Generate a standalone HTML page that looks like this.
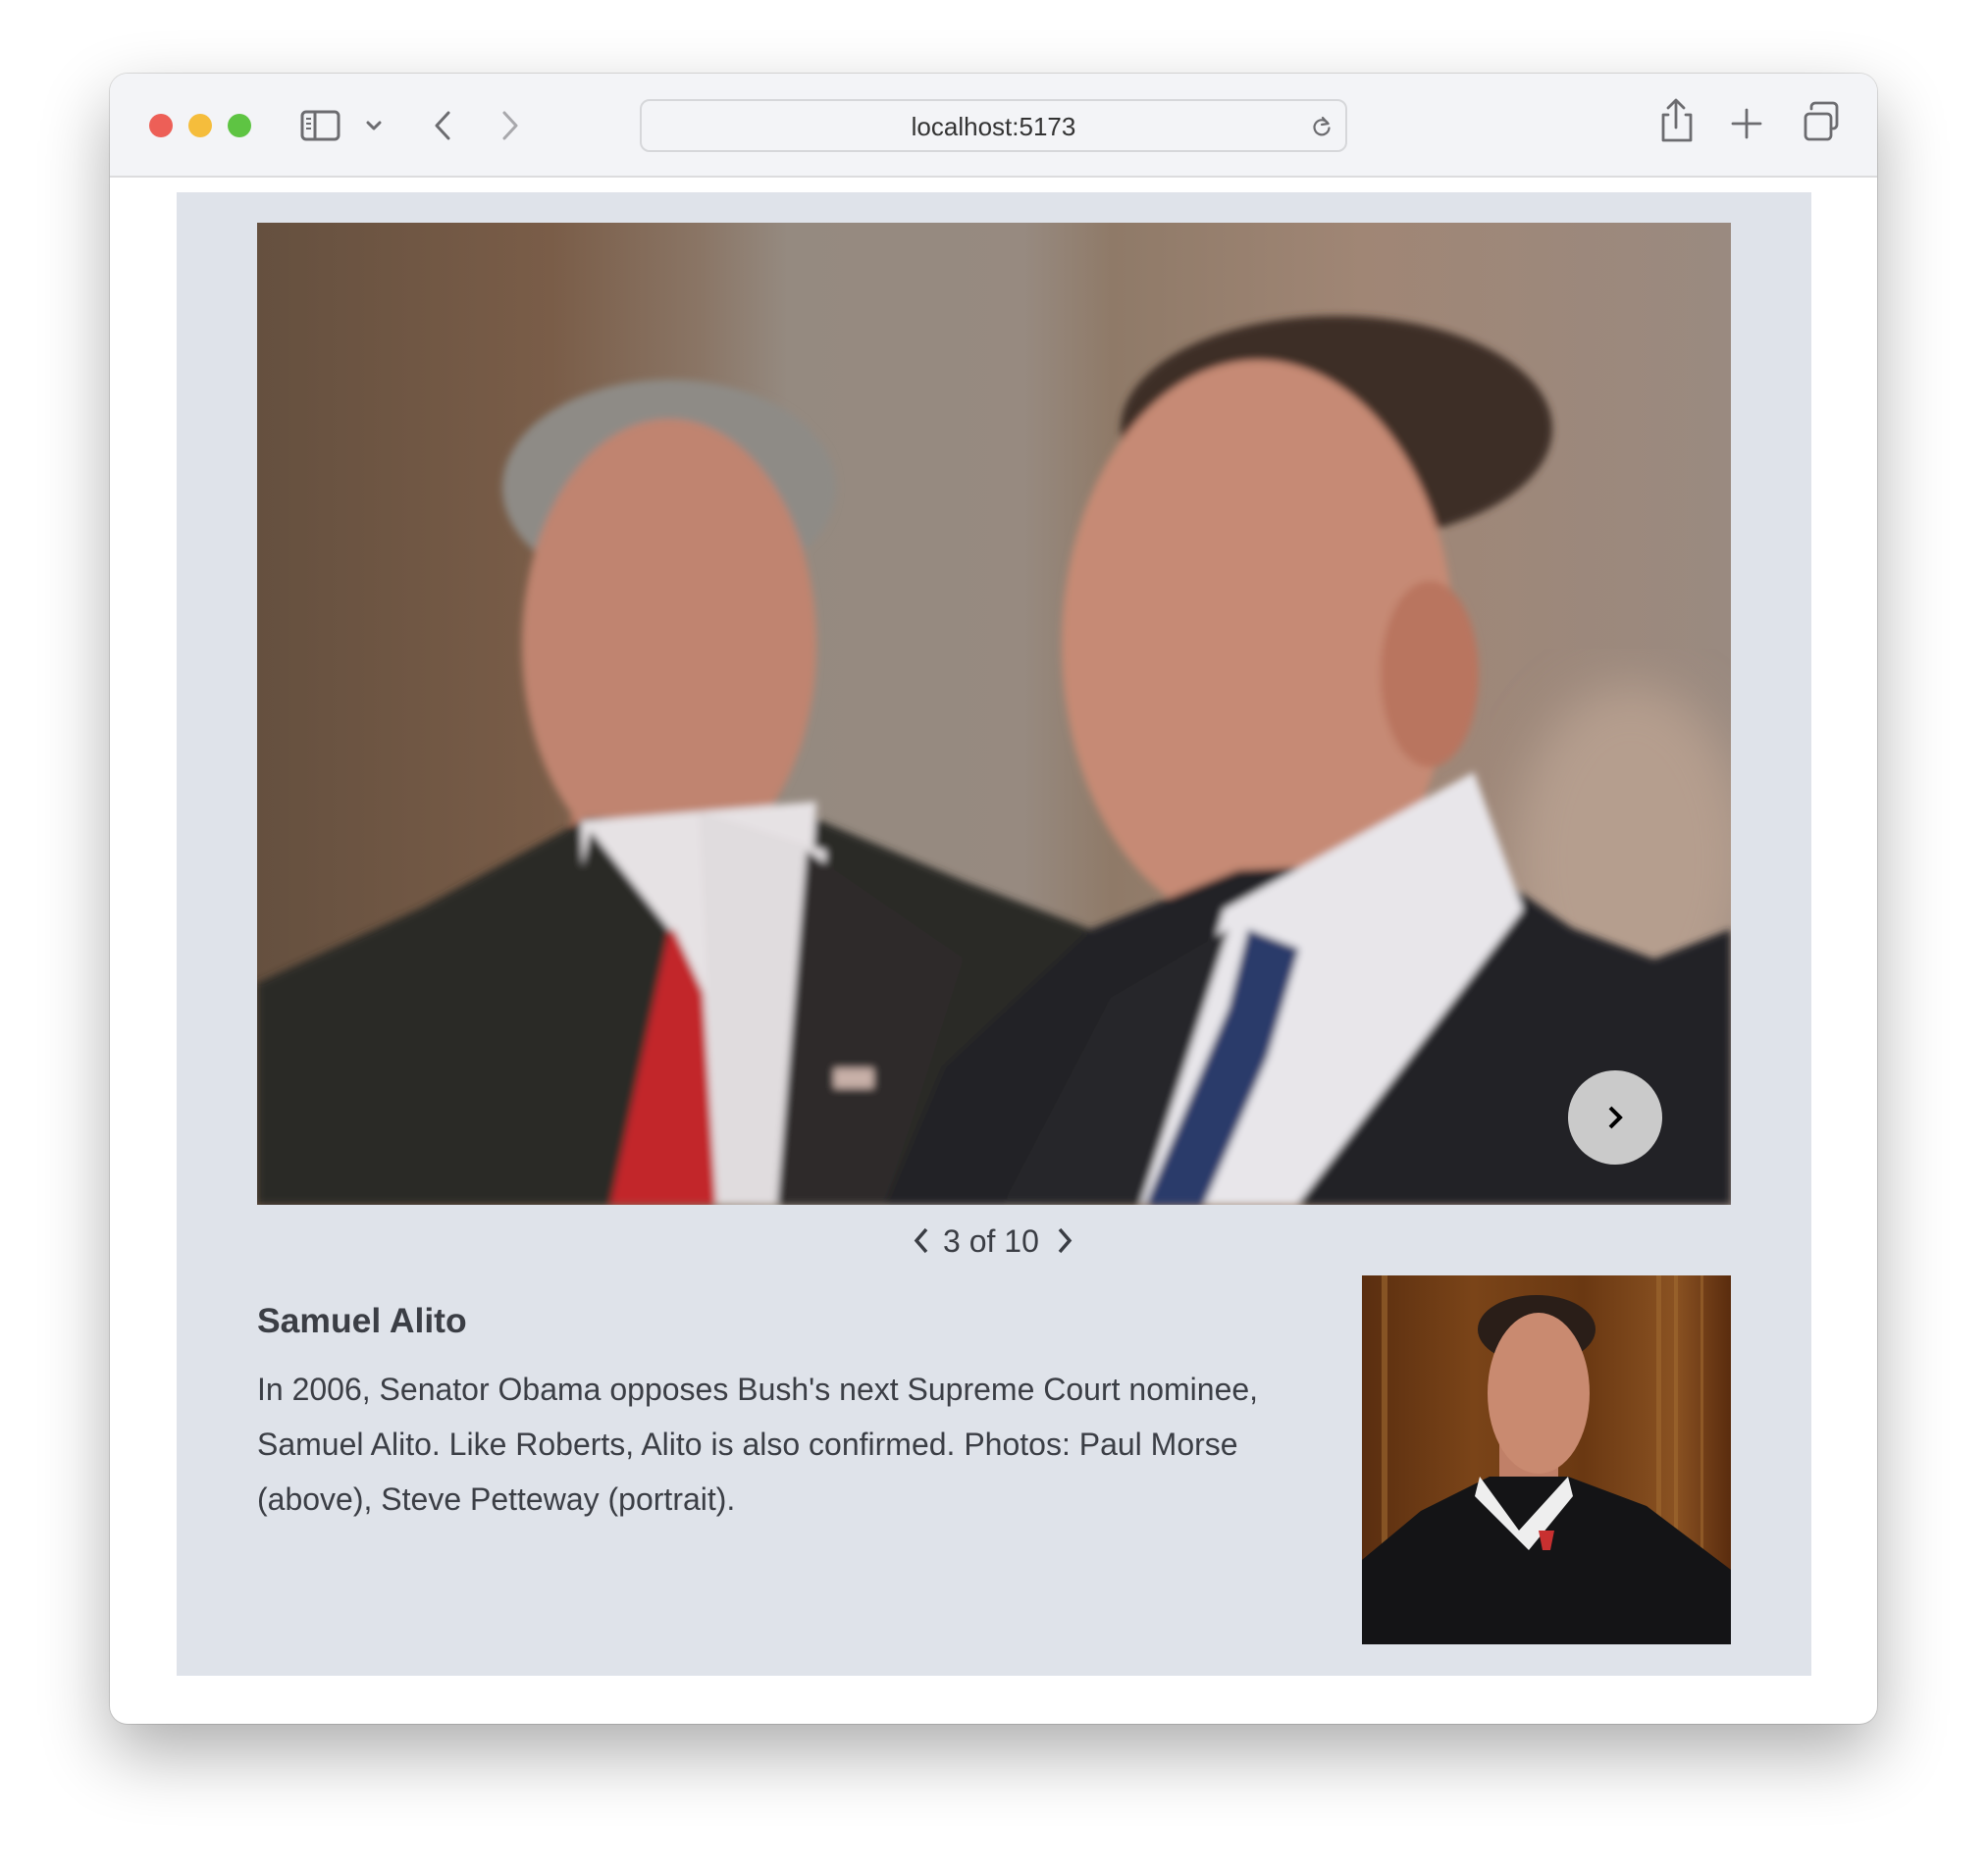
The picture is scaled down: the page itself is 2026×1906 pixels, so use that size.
<!DOCTYPE html>
<html><head><meta charset="utf-8">
<style>
*{margin:0;padding:0;box-sizing:border-box}
html,body{width:2026px;height:1906px;background:#fff;overflow:hidden;font-family:"Liberation Sans",Helvetica,Arial,sans-serif}
.win{position:absolute;left:112px;top:75px;width:1801px;height:1682px;border-radius:18px;background:#fff;
box-shadow:0 30px 70px rgba(0,0,0,.32),0 0 0 1px rgba(0,0,0,.12);overflow:hidden}
.bar{position:absolute;left:0;top:0;width:100%;height:106px;background:#f3f4f7;border-bottom:2px solid #dcdcde}
.dot{position:absolute;top:41px;width:24px;height:24px;border-radius:50%}
.url{position:absolute;left:540px;top:26px;width:721px;height:54px;border:2px solid #d6d7da;border-radius:10px;background:#f3f4f7;
font-size:26px;color:#333;text-align:center;line-height:52px}
.panel{position:absolute;left:68px;top:121px;width:1666px;height:1512px;background:#dfe3ea}
.photo{position:absolute;left:82px;top:31px;width:1502px;height:1001px;overflow:hidden}
.next{position:absolute;left:1336px;top:864px;width:96px;height:96px;border-radius:50%;background:#cacaca}
.pager{position:absolute;left:750px;top:1050px;width:180px;height:40px}
h2{position:absolute;left:82px;top:1130px;font-size:35.5px;font-weight:bold;color:#3b3e45}
p{position:absolute;left:82px;top:1192px;width:1100px;font-size:32px;line-height:56px;color:#3b3e45}
.portrait{position:absolute;left:1208px;top:1104px;width:376px;height:376px;overflow:hidden}
</style></head><body>
<div class="win">
 <div class="bar">
  <div class="dot" style="left:40px;background:#ed5f57"></div>
  <div class="dot" style="left:80px;background:#f5bd3c"></div>
  <div class="dot" style="left:120px;background:#5ec443"></div>
  <svg style="position:absolute;left:190px;top:30px" width="300" height="46" viewBox="0 0 300 46">
   <g fill="none" stroke="#6c6c70" stroke-width="3" stroke-linecap="round" stroke-linejoin="round">
    <rect x="6" y="9" width="37" height="28" rx="4"/><line x1="19" y1="9" x2="19" y2="37"/>
    <path d="M73 20l6 6 6-6"/>
    <path d="M155 10l-12 13 12 13"/>
   </g>
   <g stroke="#6c6c70" stroke-width="2"><line x1="10" y1="16" x2="15" y2="16"/><line x1="10" y1="21" x2="15" y2="21"/><line x1="10" y1="26" x2="15" y2="26"/></g>
   <path d="M212 10l12 13-12 13" fill="none" stroke="#a8a8ac" stroke-width="3" stroke-linecap="round" stroke-linejoin="round"/>
  </svg>
  <div class="url">localhost:5173
   <svg style="position:absolute;right:12px;top:14px" width="24" height="24" viewBox="0 0 24 24"><path d="M18.5 9A7.5 7.5 0 1 0 19.5 13.5" fill="none" stroke="#6c6c70" stroke-width="2.2" stroke-linecap="round"/><path d="M13 3l5.5 6L12 10" fill="none" stroke="#6c6c70" stroke-width="2.2" stroke-linecap="round" stroke-linejoin="round"/></svg>
  </div>
  <svg style="position:absolute;left:1575px;top:24px" width="200" height="50" viewBox="0 0 200 50">
   <g fill="none" stroke="#6c6c70" stroke-width="2.8" stroke-linecap="round" stroke-linejoin="round">
    <path d="M13 18h-5v26h28v-26h-5"/><path d="M21 31V4"/><path d="M13 11l8-8 8 8"/>
    <path d="M93 13v28M79 27h28"/>
    <rect x="153" y="17" width="26" height="26" rx="4"/><path d="M159 12v-2a4 4 0 0 1 4-4h18a4 4 0 0 1 4 4v18a4 4 0 0 1-4 4h-2"/>
   </g>
  </svg>
 </div>
 <div style="position:absolute;left:0;top:106px">
 <div class="panel" style="top:15px">
  <div class="photo">
   <svg width="1502" height="1001" viewBox="0 0 1502 1001">
    <defs>
     <linearGradient id="bg" x1="0" x2="1" y1="0" y2="0">
      <stop offset="0" stop-color="#65503f"/><stop offset=".2" stop-color="#7a5d48"/>
      <stop offset=".3" stop-color="#8a7565"/><stop offset=".36" stop-color="#958a80"/>
      <stop offset=".52" stop-color="#978a80"/><stop offset=".58" stop-color="#8f7a68"/>
      <stop offset=".75" stop-color="#a08675"/><stop offset="1" stop-color="#9a8a80"/>
     </linearGradient>
     <filter id="b"><feGaussianBlur stdDeviation="4"/></filter>
     <filter id="b2"><feGaussianBlur stdDeviation="25"/></filter>
    </defs>
    <rect width="1502" height="1001" fill="url(#bg)"/>
    <ellipse cx="1400" cy="650" rx="120" ry="180" fill="#b59e8e" filter="url(#b2)"/>
    <g filter="url(#b)">
     <rect x="320" y="520" width="180" height="200" fill="#b87862"/>
     <ellipse cx="420" cy="270" rx="170" ry="110" fill="#8e8b86"/>
     <ellipse cx="420" cy="430" rx="150" ry="230" fill="#c08470"/>
     <path d="M0 775L168 698L336 607L568 607L723 672L891 736L891 1001L0 1001Z" fill="#2b2927"/>
     <path d="M330 610L570 590L560 760L540 1001L340 1001L335 760Z" fill="#e6e2e4"/>
     <path d="M375 735L425 720L455 785L468 1001L350 1001L385 785Z" fill="#c2262c"/>
     <path d="M450 600L580 640L560 1001L470 1001Z" fill="#e0dcde"/>
     <path d="M340 620L420 720L360 1001L250 1001Z" fill="#2b2927"/>
     <path d="M560 640L720 750L640 1001L530 1001Z" fill="#2e2c2a"/>
     <rect x="588" y="862" width="40" height="20" fill="#c8b0a8"/>
     <rect x="960" y="560" width="230" height="200" fill="#c28670"/>
     <ellipse cx="1100" cy="210" rx="220" ry="115" fill="#3d2f28"/>
     <ellipse cx="1020" cy="430" rx="200" ry="290" fill="#c68a74"/>
     <ellipse cx="1195" cy="460" rx="50" ry="95" fill="#b9755f"/>
     <path d="M640 1001L700 860L850 720L1000 660L1240 650L1400 760L1502 720L1502 1001Z" fill="#242425"/>
     <path d="M985 700L1240 560L1290 700L1180 850L1060 1001L900 1001Z" fill="#e8e6ea"/>
     <path d="M1010 720L1062 740L1030 850L965 1001L905 1001L990 800Z" fill="#2a3a6a"/>
     <path d="M1290 700L1502 780L1502 1001L1060 1001Z" fill="#242425"/>
     <path d="M870 790L990 720L900 1001L760 1001Z" fill="#27272a"/>
    </g>
   </svg>
   <div class="next"><svg width="96" height="96" viewBox="0 0 96 96"><path d="M43 38l10 10-10 10" fill="none" stroke="#000" stroke-width="4"/></svg></div>
  </div>
  <div class="pager">
   <svg style="position:absolute;left:0;top:4px" width="20" height="30" viewBox="0 0 20 30"><path d="M14 3L4 14.5 14 26" fill="none" stroke="#3a3d44" stroke-width="3.5"/></svg>
   <div style="position:absolute;left:31px;top:0;font-size:32px;color:#3a3d44;line-height:38px;white-space:nowrap">3 of 10</div>
   <svg style="position:absolute;left:146px;top:4px" width="20" height="30" viewBox="0 0 20 30"><path d="M4 3L14 14.5 4 26" fill="none" stroke="#3a3d44" stroke-width="3.5"/></svg>
  </div>
  <h2>Samuel Alito</h2>
  <p>In 2006, Senator Obama opposes Bush's next Supreme Court nominee,<br>Samuel Alito. Like Roberts, Alito is also confirmed. Photos: Paul Morse<br>(above), Steve Petteway (portrait).</p>
  <div class="portrait">
   <svg width="376" height="376" viewBox="0 0 376 376">
    <defs><linearGradient id="w" x1="0" x2="1"><stop offset="0" stop-color="#5a2e10"/><stop offset=".3" stop-color="#7a4418"/><stop offset=".6" stop-color="#6a3812"/><stop offset=".85" stop-color="#8a5222"/><stop offset="1" stop-color="#5a2c0e"/></linearGradient></defs>
    <rect width="376" height="376" fill="url(#w)"/>
    <g fill="#a06a30" opacity=".6"><rect x="20" y="0" width="6" height="376"/><rect x="300" y="0" width="5" height="376"/><rect x="318" y="0" width="4" height="376"/><rect x="345" y="0" width="3" height="376"/></g>
    <rect x="140" y="170" width="60" height="50" fill="#c08068"/>
    <ellipse cx="178" cy="55" rx="60" ry="35" fill="#2a1e18"/>
    <ellipse cx="180" cy="120" rx="52" ry="82" fill="#c98a70"/>
    <path d="M0 290L60 240L130 205L210 205L290 235L376 300L376 376L0 376Z" fill="#141416"/>
    <path d="M120 205L160 260L210 205L215 225L170 280L115 225Z" fill="#eee"/>
    <path d="M180 260L196 260L192 280L184 280Z" fill="#c83030"/>
   </svg>
  </div>
 </div>
 </div>
</div>
</body></html>
